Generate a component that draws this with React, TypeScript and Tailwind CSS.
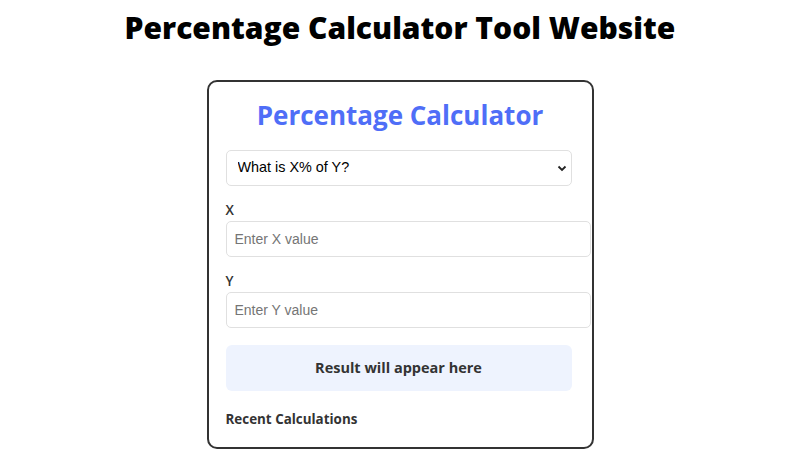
import React from "react";

export default function App() {
  return (
    <div className="min-h-screen w-full bg-white flex flex-col items-center">
      <h1
        className="mt-[10px] text-[30px] leading-[36px] font-extrabold text-black"
        style={{ fontFamily: '"Open Sans", sans-serif' }}
      >
        Percentage Calculator Tool Website
      </h1>
      <div
        className="mt-[34px] w-[387px] border-2 border-[#333] rounded-[10px] px-[17px] pt-[15px] pb-[18px] bg-white"
        style={{ fontFamily: '"Open Sans", sans-serif' }}
      >
        <h2 className="text-center text-[26px] leading-[36px] font-bold text-[#4f6ef7]">
          Percentage Calculator
        </h2>
        <div className="relative mt-[17px] w-[346px]">
          <select
            className="appearance-none w-full h-[36px] border border-[#e0e0e0] rounded-[5px] pl-[11px] pr-[30px] text-[14.4px] text-black bg-white outline-none"
            style={{ fontFamily: '"Liberation Sans", Arial, sans-serif' }}
            defaultValue="a"
          >
            <option value="a">What is X% of Y?</option>
            <option value="b">X is what % of Y?</option>
            <option value="c">Percentage change from X to Y</option>
          </select>
          <svg
            className="absolute right-[5px] top-[15px] pointer-events-none"
            width="10"
            height="7"
            viewBox="0 0 10 7"
          >
            <path d="M1.5 1.5 L5 5 L8.5 1.5" fill="none" stroke="#222" strokeWidth="1.8" />
          </svg>
        </div>
        <label className="block mt-[14px] text-[13.5px] leading-[20px] font-semibold text-[#333]">X</label>
        <input
          type="number"
          placeholder="Enter X value"
          className="box-content block mt-[1px] w-[347px] h-[18px] py-[8px] px-[8px] border border-[#e0e0e0] rounded-[5px] text-[14px] text-black placeholder:text-[#757575] outline-none"
          style={{ fontFamily: '"Liberation Sans", Arial, sans-serif' }}
        />
        <label className="block mt-[14px] text-[13.5px] leading-[20px] font-semibold text-[#333]">Y</label>
        <input
          type="number"
          placeholder="Enter Y value"
          className="box-content block mt-[1px] w-[347px] h-[18px] py-[8px] px-[8px] border border-[#e0e0e0] rounded-[5px] text-[14px] text-black placeholder:text-[#757575] outline-none"
          style={{ fontFamily: '"Liberation Sans", Arial, sans-serif' }}
        />
        <div className="mt-[17px] w-[346px] h-[46px] rounded-[6px] bg-[#eef3fe] flex items-center justify-center text-[14.5px] font-bold text-[#333]">
          Result will appear here
        </div>
        <h3 className="mt-[18px] text-[13.4px] leading-[20px] font-bold text-[#333]">Recent Calculations</h3>
      </div>
    </div>
  );
}
